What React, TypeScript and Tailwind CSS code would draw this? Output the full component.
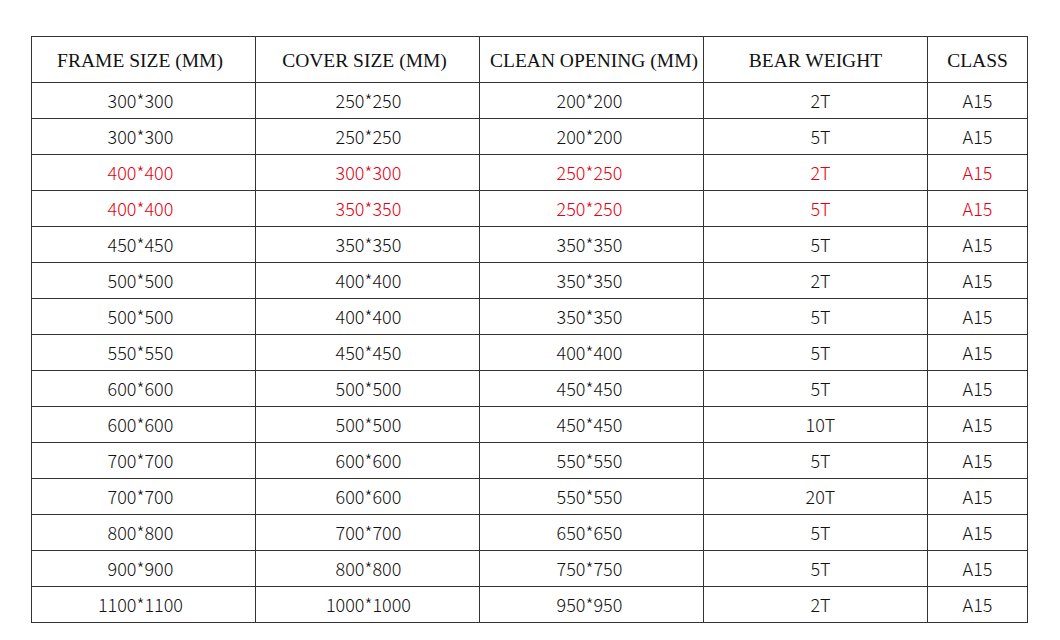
const rows: [string, string, string, string, string, boolean][] = [
  ['300*300', '250*250', '200*200', '2T', 'A15', false],
  ['300*300', '250*250', '200*200', '5T', 'A15', false],
  ['400*400', '300*300', '250*250', '2T', 'A15', true],
  ['400*400', '350*350', '250*250', '5T', 'A15', true],
  ['450*450', '350*350', '350*350', '5T', 'A15', false],
  ['500*500', '400*400', '350*350', '2T', 'A15', false],
  ['500*500', '400*400', '350*350', '5T', 'A15', false],
  ['550*550', '450*450', '400*400', '5T', 'A15', false],
  ['600*600', '500*500', '450*450', '5T', 'A15', false],
  ['600*600', '500*500', '450*450', '10T', 'A15', false],
  ['700*700', '600*600', '550*550', '5T', 'A15', false],
  ['700*700', '600*600', '550*550', '20T', 'A15', false],
  ['800*800', '700*700', '650*650', '5T', 'A15', false],
  ['900*900', '800*800', '750*750', '5T', 'A15', false],
  ['1100*1100', '1000*1000', '950*950', '2T', 'A15', false],
];

const headers = ['FRAME SIZE (MM)', 'COVER SIZE (MM)', 'CLEAN OPENING (MM)', 'BEAR WEIGHT', 'CLASS'];

// small per-column nudges so text sits where it does in the source sheet
const headPad = ['pr-[7px]', 'pr-[6px]', 'pl-[5px]', '', ''];
const cellPad = ['pr-[6px]', 'pl-[2px]', 'pr-[4px]', 'pl-[10px]', ''];

export default function App() {
  return (
    <div className="w-[1060px] h-[640px] bg-white pt-[36px] pl-[31px]">
      <table className="border-collapse table-fixed w-[996px]">
        <colgroup>
          <col className="w-[224px]" />
          <col className="w-[224px]" />
          <col className="w-[224px]" />
          <col className="w-[224px]" />
          <col className="w-[100px]" />
        </colgroup>
        <thead>
          <tr className="h-[46px]">
            {headers.map((h, j) => (
              <th
                key={h}
                className={`border border-[#333] p-0 pt-[3px] text-center font-normal text-[19.5px] text-[#111] whitespace-nowrap font-['Liberation_Serif','Times_New_Roman',serif] ${headPad[j]}`}
              >
                {h}
              </th>
            ))}
          </tr>
        </thead>
        <tbody>
          {rows.map((r, i) => (
            <tr key={i} className="h-[36px]">
              {r.slice(0, 5).map((c, j) => (
                <td
                  key={j}
                  className={`border border-[#333] p-0 text-center text-[18px] font-light font-['Noto_Sans_CJK_SC','Noto_Sans',sans-serif] ${cellPad[j]} ${
                    r[5] ? 'text-[#e60012]' : 'text-[#111]'
                  }`}
                >
                  {c as string}
                </td>
              ))}
            </tr>
          ))}
        </tbody>
      </table>
    </div>
  );
}
